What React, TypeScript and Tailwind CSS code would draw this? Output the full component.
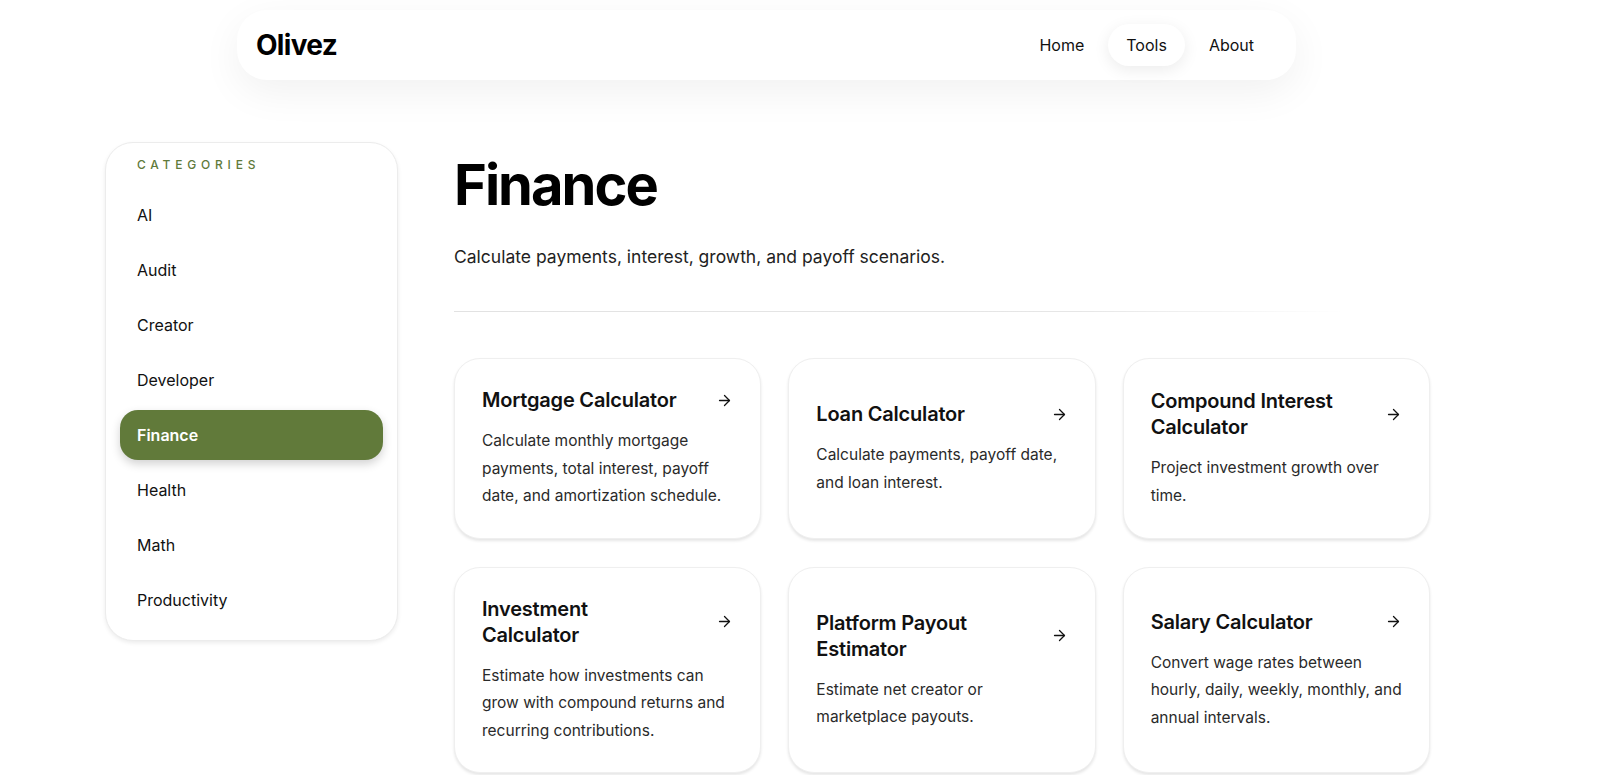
import React from 'react';
import { ArrowRight } from 'lucide-react';

const categories = ['AI', 'Audit', 'Creator', 'Developer', 'Finance', 'Health', 'Math', 'Productivity'];

const tools = [
  { title: 'Mortgage Calculator', desc: 'Calculate monthly mortgage payments, total interest, payoff date, and amortization schedule.' },
  { title: 'Loan Calculator', desc: 'Calculate payments, payoff date, and loan interest.' },
  { title: 'Compound Interest Calculator', desc: 'Project investment growth over time.' },
  { title: 'Investment Calculator', desc: 'Estimate how investments can grow with compound returns and recurring contributions.' },
  { title: 'Platform Payout Estimator', desc: 'Estimate net creator or marketplace payouts.' },
  { title: 'Salary Calculator', desc: 'Convert wage rates between hourly, daily, weekly, monthly, and annual intervals.' },
];

const Header: React.FC = () => (
  <header className="pt-[10px] pl-[237px]">
    <div className="w-[1059px] h-[70px] bg-white rounded-[30px] shadow-[0_12px_40px_rgba(0,0,0,0.06)] flex items-center justify-between pl-[19px] pr-[24px]">
      <span className="text-[28px] font-bold tracking-tight text-black">Olivez</span>
      <nav className="flex items-center gap-[6px] text-[16px] text-[#111]">
        <a className="px-[18px] py-[9px] rounded-full">Home</a>
        <a className="px-[18px] py-[9px] rounded-full bg-white shadow-[0_4px_16px_rgba(0,0,0,0.08)]">Tools</a>
        <a className="px-[18px] py-[9px] rounded-full">About</a>
      </nav>
    </div>
  </header>
);

const Sidebar: React.FC = () => (
  <aside className="self-start w-[293px] shrink-0 bg-white border border-[#ececec] rounded-[28px] shadow-[0_2px_4px_rgba(0,0,0,0.08)] px-[14px] pt-[14px] pb-[15px]">
    <div className="pl-[17px] text-[12px] leading-4 tracking-[0.4em] font-medium text-[#5f7a3a]">CATEGORIES</div>
    <ul className="mt-[17px] flex flex-col gap-[5px]">
      {categories.map((c) => (
        <li
          key={c}
          className={
            c === 'Finance'
              ? 'h-[50px] flex items-center pl-[17px] rounded-[18px] bg-[#617a3a] text-white font-semibold text-[16px] shadow-[0_4px_10px_rgba(0,0,0,0.18)]'
              : 'h-[50px] flex items-center pl-[17px] rounded-[18px] text-[#111] text-[16px]'
          }
        >
          {c}
        </li>
      ))}
    </ul>
  </aside>
);

const ToolCard: React.FC<{ title: string; desc: string }> = ({ title, desc }) => (
  <div className="bg-white border border-[#efefef] rounded-[26px] shadow-[0_2px_3px_rgba(0,0,0,0.1)] px-[27px] py-[28px] flex flex-col justify-center">
    <div className="flex items-center justify-between gap-4">
      <h3 className="max-w-[200px] text-[20px] leading-[26px] font-semibold text-[#111] tracking-[-0.01em]">{title}</h3>
      <ArrowRight className="w-[17px] h-[17px] shrink-0 text-[#111]" strokeWidth={1.8} />
    </div>
    <p className="mt-[14px] text-[15.5px] leading-[27.5px] text-[#2a2a2a]">{desc}</p>
  </div>
);

export default function App() {
  return (
    <div className="min-h-screen bg-white font-['Inter',sans-serif] text-[#111]">
      <Header />
      <div className="flex items-start pl-[105px] pt-[62px] gap-[56px]">
        <Sidebar />
        <main className="w-[976px]">
          <h1 className="text-[56px] leading-none font-bold tracking-[-0.035em] text-black mt-[15px]">Finance</h1>
          <p className="mt-[31px] text-[17.5px] text-[#222]">Calculate payments, interest, growth, and payoff scenarios.</p>
          <div className="mt-[41px] h-px w-[890px] bg-gradient-to-r from-[#e2e2e2] via-[#e6e6e6] via-70% to-transparent" />
          <div className="mt-[46px] grid grid-cols-3 gap-x-[27px] gap-y-[28px]">
            {tools.map((t) => (
              <ToolCard key={t.title} {...t} />
            ))}
          </div>
        </main>
      </div>
    </div>
  );
}
